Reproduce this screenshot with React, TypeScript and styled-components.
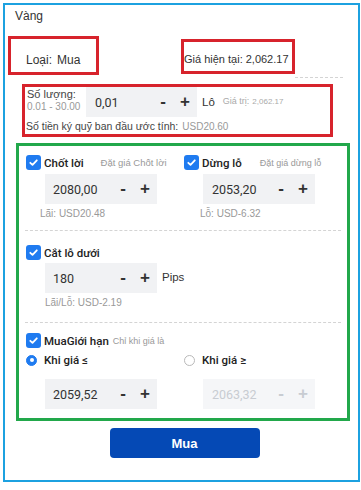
import React from "react";
import styled, { createGlobalStyle } from "styled-components";

const Global = createGlobalStyle`
  html, body { margin: 0; padding: 0; background: #fff; }
  body { font-family: "Liberation Sans", Arial, sans-serif; color: #333; }
  * { box-sizing: border-box; }
`;

const Panel = styled.div`
  margin: 3px 0 0 3px;
  width: 357px;
  height: 479px;
  border: 2px solid #1ca1e0;
  display: flex;
  flex-direction: column;
`;

const Title = styled.div`
  margin: 3px 0 0 10px;
  font-size: 12px;
  line-height: 16px;
  color: #333;
`;

const HeaderRow = styled.div`
  display: flex;
  align-items: flex-start;
  margin: 12px 0 0 3px;
`;

const Mark = styled.div<{ $w: number; $h: number; $top?: number; $left?: number; $pt?: number; $pl?: number; $gap?: number; $size?: number }>`
  width: ${(p) => p.$w}px;
  height: ${(p) => p.$h}px;
  margin-top: ${(p) => p.$top ?? 0}px;
  margin-left: ${(p) => p.$left ?? 0}px;
  padding: ${(p) => p.$pt ?? 0}px 0 0 ${(p) => p.$pl ?? 0}px;
  border: 3px solid #d7232c;
  display: flex;
  align-items: center;
  gap: ${(p) => p.$gap ?? 5}px;
  font-size: ${(p) => p.$size ?? 12}px;
  color: #333;
  white-space: nowrap;
`;

const Divider = styled.div<{ $left?: number; $width?: number; $top?: number }>`
  margin-top: ${(p) => p.$top ?? 0}px;
  margin-left: ${(p) => p.$left ?? 6}px;
  ${(p) => (p.$width ? `width: ${p.$width}px;` : "margin-right: 6px;")}
  border-top: 1px dashed #d4d4d4;
`;

const QtyBox = styled.div`
  margin: 6px 0 0 17px;
  width: 311px;
  height: 53px;
  border: 3px solid #d7232c;
  display: flex;
  flex-direction: column;
`;

const QtyRow = styled.div`
  display: flex;
  align-items: center;
  height: 30px;
`;

const QtyLabel = styled.div`
  width: 61px;
  align-self: flex-start;
  padding: 1px 0 0 2px;
  display: flex;
  flex-direction: column;
`;

const LabelMain = styled.span`
  font-size: 11px;
  line-height: 13px;
  color: #444;
`;

const LabelSub = styled.span`
  font-size: 10px;
  line-height: 12px;
  color: #999;
`;

const Stepper = styled.div<{ $w: number; $ml?: number; $mt?: number; $disabled?: boolean }>`
  width: ${(p) => p.$w}px;
  height: 30px;
  margin-left: ${(p) => p.$ml ?? 0}px;
  margin-top: ${(p) => p.$mt ?? 0}px;
  flex: none;
  background: ${(p) => (p.$disabled ? "#f5f6f8" : "#f1f2f4")};
  color: ${(p) => (p.$disabled ? "#c8ccd2" : "#333")};
  display: flex;
  align-items: center;
  padding-right: 1px;
`;

const StepValue = styled.span<{ $pl: number }>`
  flex: 1;
  padding-left: ${(p) => p.$pl}px;
  font-family: Roboto, "Liberation Sans", sans-serif;
  font-size: 12.5px;
`;

const StepBtn = styled.span`
  width: 22px;
  text-align: center;
  font-family: "Liberation Sans", Arial, sans-serif;
  font-size: 17px;
  font-weight: 700;
  line-height: 30px;
`;

const Unit = styled.span<{ $ml: number }>`
  margin-left: ${(p) => p.$ml}px;
  font-size: 11.5px;
  color: #333;
`;

const ValueNote = styled.span`
  margin-left: 8px;
  margin-top: -2px;
  font-size: 9px;
  color: #aaa;
  & b {
    font-weight: 400;
    font-size: 8px;
    margin-left: 3px;
  }
`;

const MarginRow = styled.div`
  margin: 2px 0 0 1px;
  line-height: 15px;
  font-size: 10.5px;
  color: #444;
  white-space: nowrap;
  & span {
    margin-left: 4px;
    font-size: 10px;
    color: #999;
  }
`;

const GreenBox = styled.div`
  margin: 6px 0 0 11px;
  width: 334px;
  height: 278px;
  border: 3px solid #22a84b;
  display: flex;
  flex-direction: column;
`;

const Section = styled.div<{ $h: number; $pt: number }>`
  height: ${(p) => p.$h}px;
  padding: ${(p) => p.$pt}px 0 0 7px;
  display: flex;
  flex-direction: column;
`;

const TwoCols = styled.div<{ $mt?: number }>`
  display: grid;
  grid-template-columns: 158px 1fr;
  margin-top: ${(p) => p.$mt ?? 0}px;
  align-items: center;
`;

const Col = styled.div`
  display: flex;
  flex-direction: column;
  min-width: 0;
`;

const CheckRow = styled.div`
  display: flex;
  align-items: center;
  height: 15px;
  white-space: nowrap;
`;

const CheckBox = styled.span`
  width: 15px;
  height: 15px;
  border-radius: 3px;
  background: #1f7bf0;
  display: inline-flex;
  align-items: center;
  justify-content: center;
  flex: none;
`;

const OptLabel = styled.span<{ $ml?: number }>`
  margin-left: ${(p) => p.$ml ?? 3}px;
  font-family: Roboto, "Liberation Sans", sans-serif;
  font-size: 11.5px;
  font-weight: 500;
  color: #222;
`;

const Hint = styled.span<{ $ml: number; $size?: number }>`
  margin-left: ${(p) => p.$ml}px;
  font-size: ${(p) => p.$size ?? 9.5}px;
  color: #999;
`;

const Result = styled.div<{ $ml: number }>`
  margin: 3px 0 0 ${(p) => p.$ml}px;
  font-size: 10px;
  line-height: 13px;
  color: #999;
`;

const StepLine = styled.div`
  display: flex;
  align-items: center;
`;

const RadioRow = styled.div`
  display: flex;
  align-items: center;
  height: 14px;
`;

const Radio = styled.span<{ $on?: boolean }>`
  width: 11px;
  height: 11px;
  border-radius: 50%;
  flex: none;
  background: ${(p) => (p.$on ? "#1f7bf0" : "#fff")};
  border: 1px solid ${(p) => (p.$on ? "#1f7bf0" : "#b9b9b9")};
  display: inline-flex;
  align-items: center;
  justify-content: center;
  &::after {
    content: "";
    width: 4px;
    height: 4px;
    border-radius: 50%;
    background: ${(p) => (p.$on ? "#fff" : "transparent")};
  }
`;

const Footer = styled.div`
  display: flex;
  justify-content: center;
  padding-left: 6px;
  margin-top: 7px;
`;

const BuyButton = styled.button`
  width: 150px;
  height: 30px;
  border: none;
  border-radius: 4px;
  background: #0549b5;
  color: #fff;
  font-family: "Liberation Sans", Arial, sans-serif;
  font-size: 13px;
  font-weight: 700;
`;

const Tick = () => (
  <svg width="11" height="11" viewBox="0 0 11 11">
    <path d="M2.3 5.8 L4.5 7.9 L8.8 3.3" fill="none" stroke="#fff" strokeWidth="1.8" strokeLinecap="round" strokeLinejoin="round" />
  </svg>
);

const Check = ({ label, hint, hintMl, hintSize }: { label: string; hint?: string; hintMl?: number; hintSize?: number }) => (
  <CheckRow>
    <CheckBox>
      <Tick />
    </CheckBox>
    <OptLabel>{label}</OptLabel>
    {hint && (
      <Hint $ml={hintMl ?? 17} $size={hintSize}>
        {hint}
      </Hint>
    )}
  </CheckRow>
);

const Step = ({ value, w, ml, mt, pl, disabled }: { value: string; w: number; ml?: number; mt?: number; pl: number; disabled?: boolean }) => (
  <Stepper $w={w} $ml={ml} $mt={mt} $disabled={disabled}>
    <StepValue $pl={pl}>{value}</StepValue>
    <StepBtn>-</StepBtn>
    <StepBtn>+</StepBtn>
  </Stepper>
);

export default function App() {
  return (
    <>
      <Global />
      <Panel>
        <Title>Vàng</Title>
        <HeaderRow>
          <Mark $w={91} $h={39} $pt={9} $pl={15}>
            <span>Loại:</span>
            <span>Mua</span>
          </Mark>
          <Mark $w={114} $h={35} $top={3} $left={82} $pt={5} $pl={0} $gap={3} $size={11}>
            <span>Giá hiện tại:</span>
            <span>2,062.17</span>
          </Mark>
        </HeaderRow>
        <Divider $top={2} $left={290} $width={48} />
        <QtyBox>
          <QtyRow>
            <QtyLabel>
              <LabelMain>Số lượng:</LabelMain>
              <LabelSub>0.01 - 30.00</LabelSub>
            </QtyLabel>
            <Step value="0,01" w={111} pl={9} />
            <Unit $ml={5}>Lô</Unit>
            <ValueNote>
              Giá trị:<b>2,062.17</b>
            </ValueNote>
          </QtyRow>
          <MarginRow>
            Số tiền ký quỹ ban đầu ước tính:<span>USD20.60</span>
          </MarginRow>
        </QtyBox>
        <GreenBox>
          <Section $h={84} $pt={9}>
            <TwoCols>
              <Col>
                <Check label="Chốt lời" hint="Đặt giá Chốt lời" hintMl={17} />
                <Step value="2080,00" w={112} ml={19} mt={4} pl={8} />
                <Result $ml={14}>Lãi: USD20.48</Result>
              </Col>
              <Col>
                <Check label="Dừng lỗ" hint="Đặt giá dừng lỗ" hintMl={18} hintSize={9} />
                <Step value="2053,20" w={112} ml={19} mt={4} pl={9} />
                <Result $ml={16}>Lỗ: USD-6.32</Result>
              </Col>
            </TwoCols>
          </Section>
          <Divider />
          <Section $h={91} $pt={14}>
            <Check label="Cắt lỗ dưới" />
            <StepLine>
              <Step value="180" w={112} ml={19} mt={3} pl={8} />
              <Unit $ml={5}>Pips</Unit>
            </StepLine>
            <Result $ml={19}>Lãi/Lỗ: USD-2.19</Result>
          </Section>
          <Divider />
          <Section $h={95} $pt={10}>
            <Check label="MuaGiới hạn" hint="Chỉ khi giá là" hintMl={4} hintSize={9} />
            <TwoCols $mt={5}>
              <RadioRow>
                <Radio $on />
                <OptLabel $ml={7}>Khi giá ≤</OptLabel>
              </RadioRow>
              <RadioRow>
                <Radio />
                <OptLabel $ml={7}>Khi giá ≥</OptLabel>
              </RadioRow>
            </TwoCols>
            <TwoCols $mt={12}>
              <Step value="2059,52" w={112} ml={19} pl={8} />
              <Step value="2063,32" w={112} ml={19} pl={9} disabled />
            </TwoCols>
          </Section>
        </GreenBox>
        <Footer>
          <BuyButton>Mua</BuyButton>
        </Footer>
      </Panel>
    </>
  );
}
